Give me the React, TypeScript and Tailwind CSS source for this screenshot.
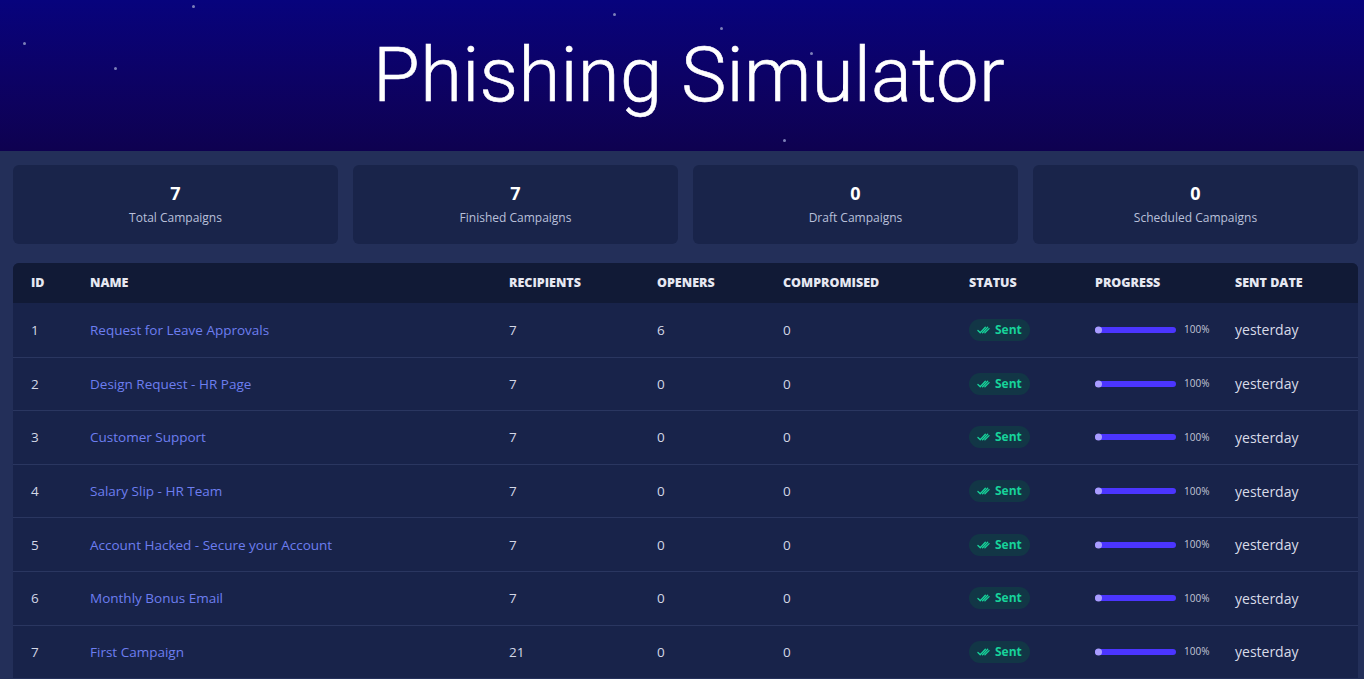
import React from 'react';

const stats = [
  { value: 7, label: 'Total Campaigns' },
  { value: 7, label: 'Finished Campaigns' },
  { value: 0, label: 'Draft Campaigns' },
  { value: 0, label: 'Scheduled Campaigns' },
];

const campaigns = [
  { id: 1, name: 'Request for Leave Approvals', recipients: 7, openers: 6, compromised: 0 },
  { id: 2, name: 'Design Request - HR Page', recipients: 7, openers: 0, compromised: 0 },
  { id: 3, name: 'Customer Support', recipients: 7, openers: 0, compromised: 0 },
  { id: 4, name: 'Salary Slip - HR Team', recipients: 7, openers: 0, compromised: 0 },
  { id: 5, name: 'Account Hacked - Secure your Account', recipients: 7, openers: 0, compromised: 0 },
  { id: 6, name: 'Monthly Bonus Email', recipients: 7, openers: 0, compromised: 0 },
  { id: 7, name: 'First Campaign', recipients: 21, openers: 0, compromised: 0 },
];

// star dots scattered over the header
const stars = [
  { x: 192, y: 5 },
  { x: 23, y: 42 },
  { x: 114, y: 67 },
  { x: 613, y: 13 },
  { x: 720, y: 27 },
  { x: 810, y: 52 },
  { x: 783, y: 139 },
];

const cols =
  'grid grid-cols-[59px_419px_148px_126px_186px_126px_140px_1fr] items-center [&>div]:pl-[18px]';

const DoubleCheck = () => (
  <svg width="13" height="10" viewBox="0 0 14 10" fill="none" stroke="currentColor" strokeWidth="1.4" strokeLinecap="round" strokeLinejoin="round">
    <path d="M1 5.5 3.5 8 9 2" />
    <path d="M6 8 11.5 2" />
    <path d="M8.5 8 13 3.5" />
  </svg>
);

export default function App() {
  return (
    <div className="min-h-screen bg-[#232f59] font-['Open_Sans',sans-serif]">
      {/* Header */}
      <header className="relative h-[151px] bg-gradient-to-b from-[#07037d] to-[#0e0150] flex items-center justify-center overflow-hidden">
        {stars.map((s, i) => (
          <span
            key={i}
            className="absolute w-[3px] h-[3px] rounded-full bg-[#7c7fb8]"
            style={{ left: s.x, top: s.y }}
          />
        ))}
        <h1 className="relative font-['Roboto',sans-serif] font-light [-webkit-text-stroke:0.6px_white] text-white text-[76px] leading-none tracking-[0.3px] -mt-[2px] pl-[14px]">
          Phishing Simulator
        </h1>
      </header>

      <main className="pl-[13px] pr-[6px] pt-[14px]">
        {/* Stat cards */}
        <div className="grid grid-cols-4 gap-[15px]">
          {stats.map((s) => (
            <div key={s.label} className="h-[79px] rounded-[6px] bg-[#19244a] flex flex-col items-center justify-center">
              <div className="text-white text-[18px] font-bold leading-none -mt-[2px]">{s.value}</div>
              <div className="text-[#b9c0da] text-[12px] leading-none mt-[10px]">{s.label}</div>
            </div>
          ))}
        </div>

        {/* Campaign table */}
        <div className="mt-[19px] rounded-t-[6px] overflow-hidden bg-[#18234a]">
          <div className={`${cols} h-[40px] bg-[#111a36] text-[#e6e8f2] text-[12.5px] font-extrabold uppercase`}>
            <div>ID</div>
            <div>Name</div>
            <div>Recipients</div>
            <div>Openers</div>
            <div>Compromised</div>
            <div>Status</div>
            <div>Progress</div>
            <div>Sent Date</div>
          </div>
          {campaigns.map((c, i) => (
            <div
              key={c.id}
              className={`${cols} h-[53.6px] text-[13.5px] text-[#d3d7e6] ${i > 0 ? 'border-t border-[#2a3660]' : ''}`}
            >
              <div>{c.id}</div>
              <div className="text-[#6d7ef0]">{c.name}</div>
              <div>{c.recipients}</div>
              <div>{c.openers}</div>
              <div>{c.compromised}</div>
              <div>
                <span className="inline-flex items-center gap-[5px] h-[22px] px-[8px] rounded-full bg-[#123646] text-[#17d39a] text-[12px] font-bold">
                  <DoubleCheck />
                  Sent
                </span>
              </div>
              <div className="flex items-center gap-[8px]">
                <div className="relative w-[81px] h-[6px] rounded-full bg-[#4b35ff]">
                  <span className="absolute left-0 top-1/2 -translate-y-1/2 w-[7px] h-[7px] rounded-full bg-[#a99dff]" />
                </div>
                <span className="text-[10px] text-[#c3c7d8]">100%</span>
              </div>
              <div className="text-[14px] text-[#d8dbe8]">yesterday</div>
            </div>
          ))}
        </div>
      </main>
    </div>
  );
}
